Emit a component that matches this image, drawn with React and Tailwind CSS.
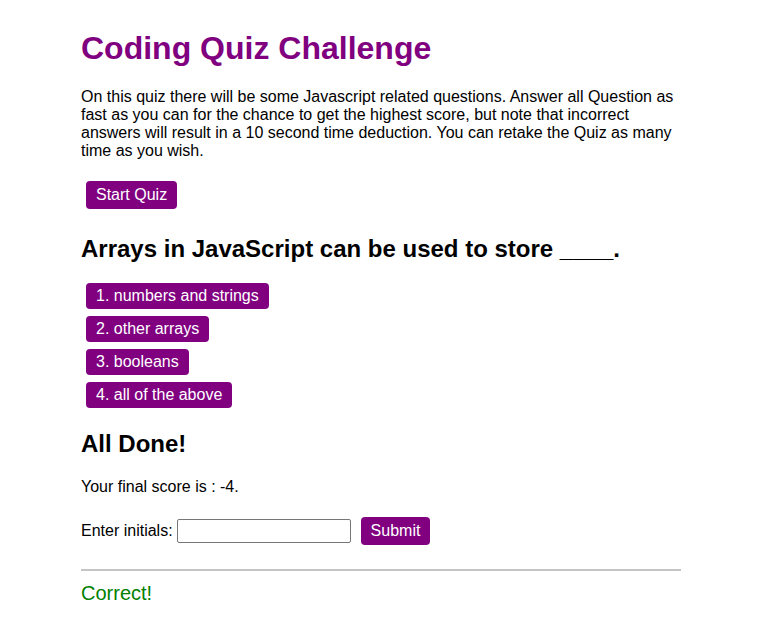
export default function App() {
  const answers = ["1. numbers and strings", "2. other arrays", "3. booleans", "4. all of the above"];
  return (
    <div className="min-h-[641px] bg-white font-['Liberation_Sans',Arial,sans-serif] text-black">
      <div className="ml-[81px] w-[600px] pt-[30px]">
        <h1 className="text-[32px] leading-[37px] font-bold text-[#800080]">Coding Quiz Challenge</h1>
        <p className="mt-[21px] text-[16px] leading-[18px]">
          On this quiz there will be some Javascript related questions. Answer all Question as fast as you can for the chance to get the highest score, but note that incorrect answers will result in a 10 second time deduction. You can retake the Quiz as many time as you wish.
        </p>
        <button className="mt-[21px] ml-[5px] h-[28px] px-[10px] rounded-[4px] bg-[#800080] text-white text-[16px] leading-[18px]">
          Start Quiz
        </button>
        <h2 className="mt-[26px] text-[24px] leading-[28px] font-bold">Arrays in JavaScript can be used to store ____.</h2>
        <div className="mt-[20px] flex flex-col items-start gap-[7px]">
          {answers.map((a) => (
            <button key={a} className="ml-[5px] h-[26px] px-[10px] rounded-[4px] bg-[#800080] text-white text-[16px] leading-[18px]">
              {a}
            </button>
          ))}
        </div>
        <h2 className="mt-[22px] text-[24px] leading-[28px] font-bold">All Done!</h2>
        <p className="mt-[20px] text-[16px] leading-[18px]">Your final score is : -4.</p>
        <div className="mt-[21px] flex items-center h-[28px]">
          <span className="text-[16px] leading-[18px]">Enter initials:</span>
          <input className="ml-[4px] w-[174px] h-[24px] border border-[#767676] rounded-[2px] px-1 text-[14px]" />
          <button className="ml-[10px] h-[28px] px-[10px] rounded-[4px] bg-[#800080] text-white text-[16px] leading-[18px]">
            Submit
          </button>
        </div>
        <hr className="mt-[24px] border-0 h-[2px] bg-[#c4c4c4]" />
        <p className="mt-[11px] text-[20px] leading-[23px] text-[#008000]">Correct!</p>
      </div>
    </div>
  );
}
